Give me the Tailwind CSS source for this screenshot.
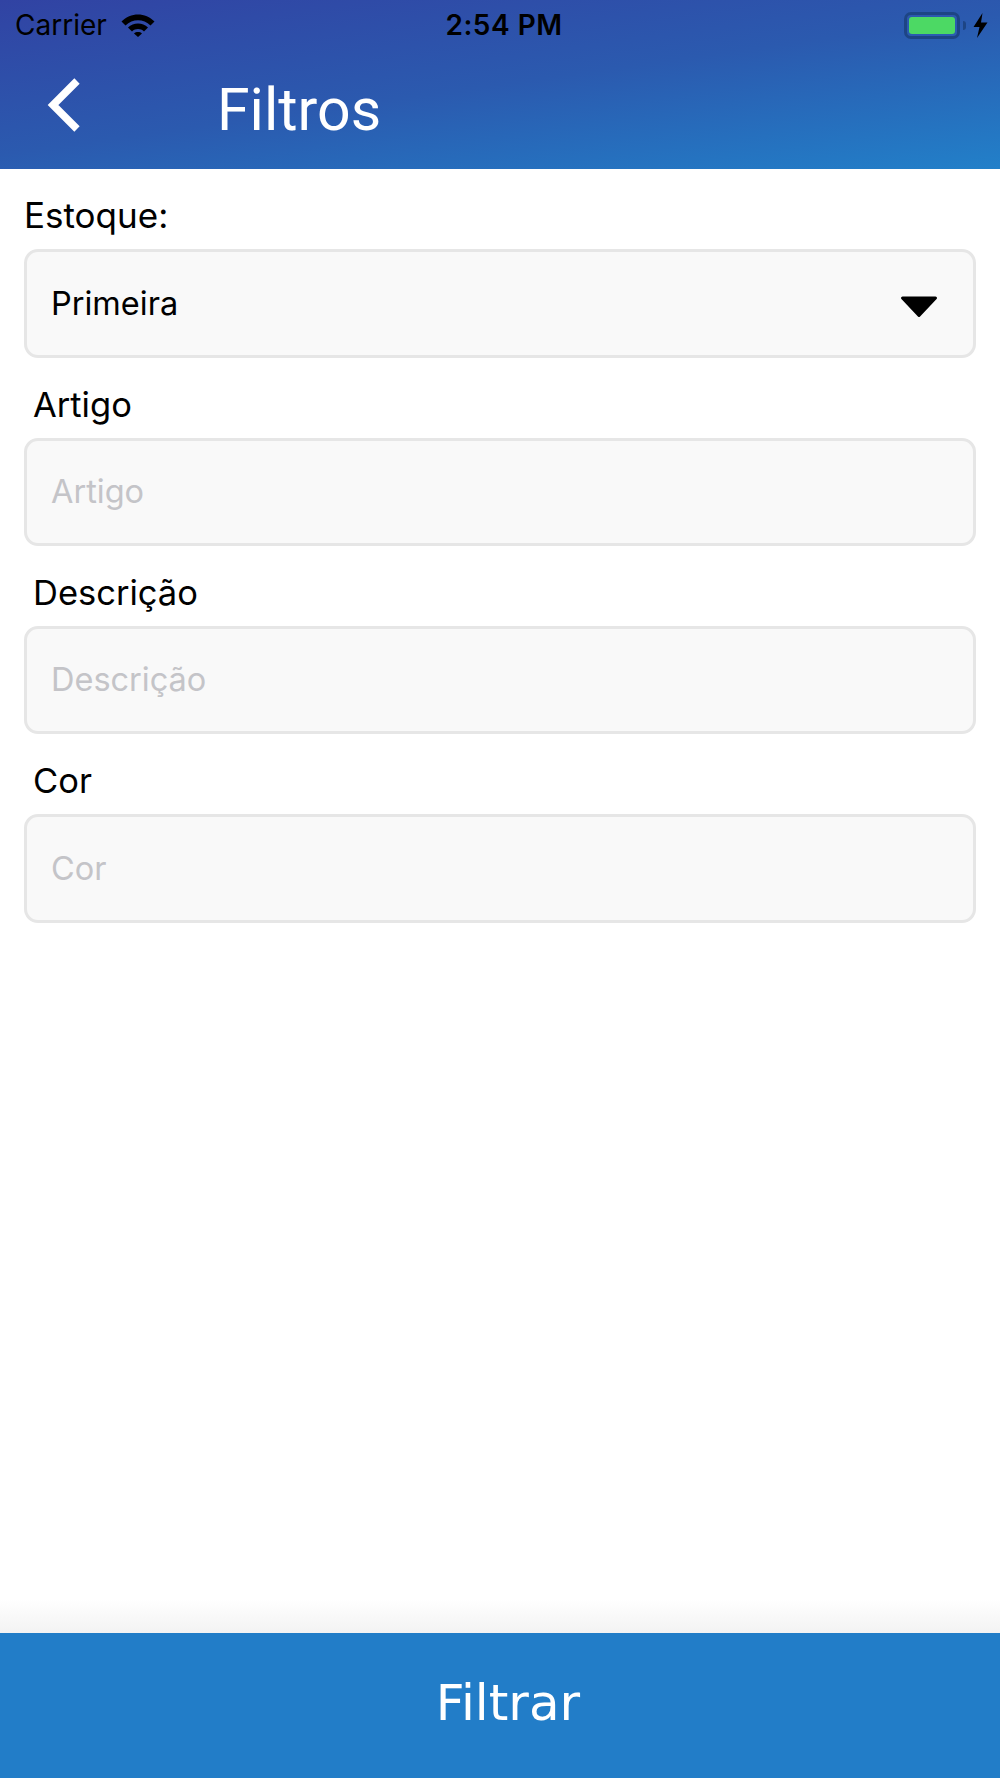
<!DOCTYPE html>
<html lang="pt">
<head>
    <meta charset="UTF-8">
    <title>Filtros</title>
    <script src="https://cdn.jsdelivr.net/npm/@tailwindcss/browser@4"></script>
</head>
<body class="bg-white">
    <div class="flex flex-col h-[1778px] w-[1000px] overflow-hidden font-['Inter',sans-serif] text-black">
        <!-- header -->
        <div class="h-[169px] bg-[linear-gradient(172deg,#3143a3_0%,#2b5aaf_50%,#2280c9_100%)]">
            <div class="flex items-center justify-between h-[50px] pl-[15px] pr-[12px]">
                <div class="flex items-center gap-[14px] w-[345px]">
                    <span class="text-[28px]">Carrier</span>
                    <svg width="34" height="24" viewBox="0 0 34 24"><path d="M0.5 8.5 C9.5 -1 24.5 -1 33.5 8.5 L29.5 12.5 C22.5 5.5 11.5 5.5 4.5 12.5 Z M7 14.5 C12.5 9.3 21.5 9.3 27 14.5 L23 18.5 C19.5 15.3 14.5 15.3 11 18.5 Z M13 20.5 C15.3 18.6 18.7 18.6 21 20.5 L17 24 Z" fill="#000"/></svg>
                </div>
                <span class="text-[28px] font-semibold tracking-[0.5px]">2:54 PM</span>
                <div class="flex items-center justify-end w-[340px]">
                    <div class="w-[56px] h-[27px] rounded-[7px] border-[3px] border-[#1d4585] p-[2px]">
                        <div class="w-full h-full rounded-[3px] bg-[#4cd964]"></div>
                    </div>
                    <div class="w-[3px] h-[9px] ml-[3px] rounded-r-full bg-[#1d4585]"></div>
                    <svg width="15" height="25" viewBox="0 0 15 25" class="ml-[7px]"><path d="M9.5 0 L0.5 14 L6.5 14 L4 25 L14.5 9.5 L8 9.5 Z" fill="#000"/></svg>
                </div>
            </div>
            <div class="flex items-center h-[119px]">
                <div class="w-[217px] pl-[47px] -mt-[10px]">
                    <svg width="34" height="54" viewBox="0 0 34 54" class="block"><path d="M30 3 L6 27 L30 51" fill="none" stroke="#fff" stroke-width="7.5"/></svg>
                </div>
                <span class="text-[59px] leading-none text-white font-['Roboto',sans-serif]">Filtros</span>
            </div>
        </div>

        <!-- form -->
        <div class="flex-1 px-[24px]">
            <div class="h-[80.3px] pt-[26px] text-[35px] leading-[41px]">Estoque:</div>
            <div class="flex items-center justify-between h-[108.33px] pl-[24px] pr-[35px] rounded-[14px] border-[3px] border-[#e6e6e6] bg-[#f9f9f9]">
                <span class="text-[32.5px] mt-[1px]">Primeira</span>
                <svg width="38" height="22" viewBox="0 0 38 22" class="mt-[8px]"><path d="M2.5 2 L35.5 2 L19 19.5 Z" fill="#000" stroke="#000" stroke-width="3" stroke-linejoin="round"/></svg>
            </div>

            <div class="h-[80px] pt-[26px] pl-[9px] text-[34.5px] leading-[41px]">Artigo</div>
            <div class="flex items-center h-[108.33px] pl-[24px] pt-[1px] rounded-[14px] border-[3px] border-[#e6e6e6] bg-[#f9f9f9] text-[32.5px] text-[#c4c4c8]">Artigo</div>

            <div class="h-[80px] pt-[26px] pl-[9px] text-[34.5px] leading-[41px]">Descrição</div>
            <div class="flex items-center h-[108.33px] pl-[24px] pt-[1px] rounded-[14px] border-[3px] border-[#e6e6e6] bg-[#f9f9f9] text-[32.5px] text-[#c4c4c8]">Descrição</div>

            <div class="h-[80px] pt-[26px] pl-[9px] text-[34.5px] leading-[41px]">Cor</div>
            <div class="flex items-center h-[108.33px] pl-[24px] pt-[1px] rounded-[14px] border-[3px] border-[#e6e6e6] bg-[#f9f9f9] text-[32.5px] text-[#c4c4c8]">Cor</div>
        </div>

        <!-- button -->
        <div class="h-[34px] bg-gradient-to-b from-white to-[#f3f3f3]"></div>
        <div class="flex items-center justify-center h-[145px] bg-[#227dc8] pl-[16px] pb-[4px]">
            <span class="text-[50px] text-white font-['DejaVu_Sans',sans-serif]">Filtrar</span>
        </div>
    </div>
</body>
</html>
